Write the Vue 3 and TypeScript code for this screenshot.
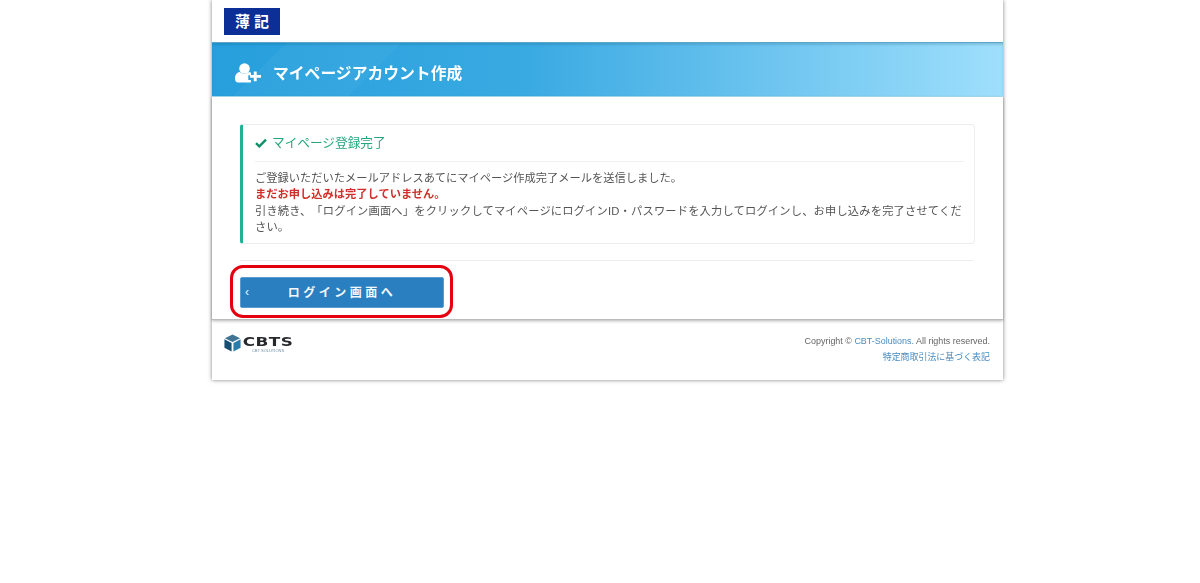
<script setup lang="ts">
const title = 'マイページアカウント作成'
</script>

<template>
  <div class="shell">
    <div class="page">
      <header class="top"><span class="badge">薄 記</span></header>
      <div class="band">
        <svg class="uicon" width="26" height="20" viewBox="0 0 26 20" aria-hidden="true">
          <circle cx="9.500" cy="5.500" r="5.300" fill="#fff" />
          <path d="M0 15.500c0-3.800 2-6.200 4.800-6.500 1.200 1.100 2.900 1.800 4.700 1.800s3.300-.7 4.500-1.700c.7.100 1.400.3 2 .7v2.500h-2.700v4.800h2.600v2.400H3.200C1.200 19.500 0 18.300 0 15.500z" fill="#fff" />
          <path d="M18.800 8.500h2.900v3.400H26v2.800h-4.300v3.500h-2.900v-3.500h-3.700v-2.800h3.700z" fill="#fff" />
        </svg>
        <h1>{{ title }}</h1>
      </div>
      <main class="content">
        <section class="card">
          <h2>
            <svg width="12" height="10" viewBox="0 0 12 10" aria-hidden="true"><path d="M1 5.200 4.300 8.400 11 1.600" fill="none" stroke="#14906a" stroke-width="2.400" /></svg>
            マイページ登録完了
          </h2>
          <div class="msg">
            <p>ご登録いただいたメールアドレスあてにマイページ作成完了メールを送信しました。</p>
            <p class="warn">まだお申し込みは完了していません。</p>
            <p class="next">引き続き、「ログイン画面へ」をクリックしてマイページにログインID・パスワードを入力してログインし、お申し込みを完了させてください。</p>
          </div>
        </section>
        <hr />
        <div class="action">
          <button type="button"><span class="chev">‹</span>ログイン画面へ</button>
        </div>
      </main>
      <footer class="foot">
        <div class="logo">
          <svg width="19" height="20" viewBox="0 0 20 20" aria-hidden="true">
            <path d="M10 1 18 5 10 9 2 5z" fill="#3f7494" />
            <path d="M1.500 6 9 10v9l-7.500-4z" fill="#174f73" />
            <path d="M18.500 6 11 10v9l7.500-4z" fill="#2a7dab" />
          </svg>
          <div class="lt"><span class="cbts">CBTS</span><span class="sub">CBT SOLUTIONS</span></div>
        </div>
        <div class="legal">
          <p>Copyright © <a>CBT-Solutions.</a> All rights reserved.</p>
          <p><a>特定商取引法に基づく表記</a></p>
        </div>
      </footer>
    </div>
  </div>
</template>

<style scoped>
.shell { padding-bottom: 40px; filter: blur(.45px); }
.page {
  box-sizing: border-box;
  width: 791px;
  height: 380px;
  margin-left: 212px;
  background: #fff;
  box-shadow: 0 0 4px rgba(0, 0, 0, .5);
  font-family: "Liberation Sans", "Noto Sans CJK JP", sans-serif;
  color: #555;
  display: flex;
  flex-direction: column;
}
.top { height: 42px; padding: 8px 0 0 12px; box-sizing: border-box; }
.badge {
  display: block;
  width: 56px;
  height: 27px;
  background: #0b2f96;
  color: #fff;
  font-size: 15px;
  line-height: 27px;
  text-align: center;
  font-weight: 700;
}
.band {
  height: 55px;
  background:
    linear-gradient(135deg, transparent 53px, rgba(255, 255, 255, .035) 53px, rgba(255, 255, 255, .035) 134px, transparent 134px),
    linear-gradient(90deg, #269fdc 0%, #3aaae2 40%, #6cc4ef 70%, #9fdffc 100%);
  border-top: 1px solid #5fa5c8;
  border-bottom: 1px solid #a9e0f8;
  box-shadow: inset 0 2px 2px rgba(0, 70, 110, .18);
  box-sizing: border-box;
  display: flex;
  align-items: center;
  padding: 6px 0 0 23px;
  gap: 12px;
  color: #fff;
}
.uicon { flex: none; }
h1 { margin: 0; font-size: 15.8px; font-weight: 700; color: #fff; }
.content { padding: 27px 28px 0; height: 223px; box-sizing: border-box; border-bottom: 1px solid #bbb; box-shadow: 0 1px 3px rgba(0, 0, 0, .3); }
.card {
  box-sizing: border-box;
  height: 120px;
  width: 735px;
  border: 1px solid #eee;
  border-left: 3px solid #1fb394;
  border-radius: 3px;
  padding: 0 10px 0 12px;
}
h2 {
  margin: 0;
  height: 37px;
  box-sizing: border-box;
  border-bottom: 1px solid #f0f0f0;
  font-size: 12.67px;
  line-height: 18px;
  font-weight: 400;
  color: #25a67e;
  display: flex;
  align-items: center;
  gap: 5px;
}
.msg { padding-top: 8px; font-size: 11.26px; line-height: 16.4px; color: #555; text-spacing-trim: space-all; }
.msg p { margin: 0; }
.msg .warn { color: #d0302a; font-weight: 700; }
.msg .next { letter-spacing: .18px; }
hr { margin: 16px 0 0; border: 0; border-top: 1px solid #eee; width: 734px; }
.action { margin-top: 16px; position: relative; width: 204px; }
.action::after {
  content: "";
  position: absolute;
  inset: -12px -9px -10px -10px;
  border: 3px solid #e5000f;
  border-radius: 13px;
  pointer-events: none;
}
button {
  position: relative;
  display: block;
  width: 204px;
  height: 31px;
  border: 1px solid #5a9bd0;
  border-radius: 2px;
  background: #2a7fc1;
  color: #f3f8fc;
  font-family: inherit;
  font-size: 12px;
  font-weight: 700;
  letter-spacing: 3.500px;
  padding: 0 0 2px 0;
  text-align: center;
}
.chev { position: absolute; left: 4px; top: 7px; font-weight: 400; letter-spacing: 0; }
.foot {
  flex: 1;
  display: flex;
  justify-content: space-between;
  padding: 13px 13px 0 11px;
}
.logo { display: flex; gap: 1px; }
.lt { display: flex; flex-direction: column; align-items: center; width: 50px; margin-top: 4px; }
.cbts {
  font-family: "DejaVu Sans", sans-serif;
  font-weight: 700;
  font-size: 12px;
  line-height: 11px;
  letter-spacing: .3px;
  color: #27282c;
  transform: scaleX(1.4);
}
.sub { font-size: 4px; line-height: 5px; color: #6f8da3; }
.legal { font-size: 8.950px; line-height: 16px; text-align: right; color: #666; }
.legal p { margin: 0; }
.legal a { color: #4a8cc0; }
</style>
